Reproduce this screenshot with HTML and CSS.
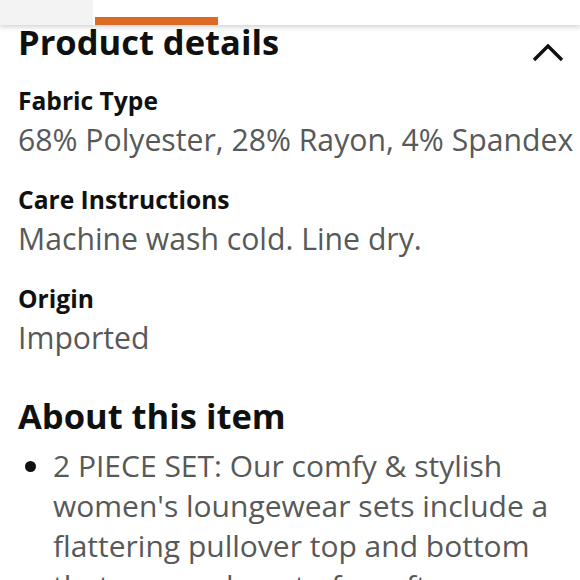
FILE: index.html
```html
<!DOCTYPE html>
<html>
<head>
<meta charset="utf-8">
<link rel="stylesheet" href="styles.css">
</head>
<body>
<div class="tabs">
  <div class="tab tab-muted"></div>
  <div class="tab tab-active"></div>
</div>
<main class="content">
  <div class="section-head">
    <h2 class="title">Product details</h2>
    <svg class="chevron" width="32" height="18" viewBox="0 0 32 18"><path d="M2 16 L16 2 L30 16" fill="none" stroke="#0f1111" stroke-width="3.4"/></svg>
  </div>
  <dl class="details">
    <div class="row">
      <dt class="label">Fabric Type</dt>
      <dd class="value">68% Polyester, 28% Rayon, 4% Spandex</dd>
    </div>
    <div class="row">
      <dt class="label">Care Instructions</dt>
      <dd class="value">Machine wash cold. Line dry.</dd>
    </div>
    <div class="row">
      <dt class="label">Origin</dt>
      <dd class="value">Imported</dd>
    </div>
  </dl>
  <h2 class="title about">About this item</h2>
  <ul class="bullets">
    <li>2 PIECE SET: Our comfy &amp; stylish women's loungewear sets include a flattering pullover top and bottom that are made out of a soft combination of fabrics</li>
  </ul>
</main>
</body>
</html>
```
FILE: styles.css
```css
html, body {
  margin: 0;
  padding: 0;
  background: #ffffff;
  font-family: "Open Sans", "Noto Sans", sans-serif;
  overflow: hidden;
}

.tabs {
  display: flex;
  align-items: stretch;
  height: 25px;
  background: #ffffff;
  box-shadow: 0 2px 5px rgba(0, 0, 0, 0.18);
  position: relative;
}

.tab-muted {
  width: 93px;
  background: #f3f3f3;
}

.tab-active {
  width: 123px;
  margin-left: 2px;
  box-sizing: border-box;
  border-bottom: 8px solid #de6a24;
}

.content {
  padding: 0 2px 0 18px;
}

.section-head {
  display: flex;
  justify-content: space-between;
  align-items: flex-start;
  margin-top: -3px;
  padding-right: 15px;
}

.title {
  margin: 0;
  font-size: 34.5px;
  font-weight: 700;
  color: #0f1111;
  line-height: 40px;
}

.chevron {
  margin-top: 22px;
  margin-right: -1px;
}

.details {
  margin: 22px 0 0;
}

.row {
  margin-bottom: 23px;
}

.label {
  font-size: 24.6px;
  font-weight: 700;
  color: #0f1111;
  line-height: 34px;
}

.value {
  margin: 2px 0 0;
  font-size: 30.2px;
  color: #575959;
  line-height: 40px;
  white-space: nowrap;
}

.about {
  margin-top: 38px;
}

.bullets {
  margin: 10px 0 0;
  padding-left: 35px;
  font-size: 30px;
  line-height: 40px;
  color: #575959;
}

.bullets li::marker {
  color: #0f1111;
}
```
